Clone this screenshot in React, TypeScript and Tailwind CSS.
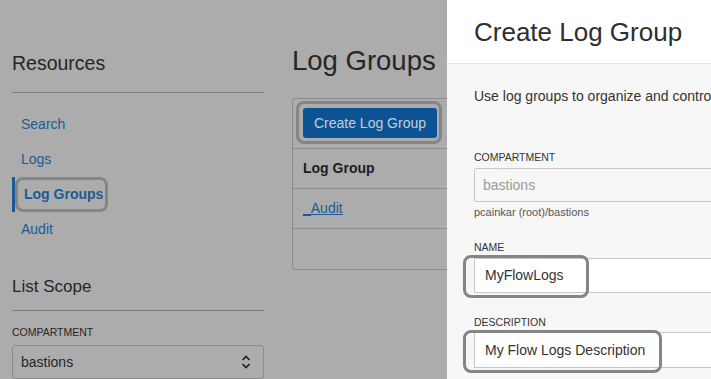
import React from 'react';

const font = { fontFamily: '"Liberation Sans", Arial, sans-serif' };

function Ring({ className }: { className: string }) {
  return <div className={`absolute border-[3px] border-[#858585] rounded-[8px] pointer-events-none ${className}`} />;
}

function Chevrons() {
  return (
    <svg width="10" height="14" viewBox="0 0 10 14" fill="none" stroke="#1e1e1e" strokeWidth="1.6">
      <path d="M1.5 5 L5 1.5 L8.5 5" />
      <path d="M1.5 9 L5 12.5 L8.5 9" />
    </svg>
  );
}

export default function App() {
  const navItems = ['Search', 'Logs', 'Log Groups', 'Audit'];

  return (
    <div className="relative w-[711px] h-[379px] overflow-hidden bg-[#acacac]" style={font}>
      {/* page under the overlay */}
      <div className="flex pl-[12px]">
        <aside className="w-[252px] shrink-0">
          <div className="mt-[53px] text-[19.5px] leading-[20px] text-[#262626]">Resources</div>
          <div className="mt-[19px] border-t border-[#7f7f7f]" />
          <ul className="mt-[14px]">
            {navItems.map((item) => {
              const active = item === 'Log Groups';
              return (
                <li
                  key={item}
                  className={`h-[35px] flex items-center pl-[9px] text-[14px] text-[#1c5a96] ${
                    active ? 'font-bold border-l-[3px] border-[#1c5a96] pl-[6px]' : ''
                  }`}
                >
                  {item}
                </li>
              );
            })}
          </ul>
          <div className="mt-[30px] text-[17px] leading-[20px] text-[#262626]">List Scope</div>
          <div className="mt-[13px] border-t border-[#7f7f7f]" />
          <div className="mt-[14px] text-[10.5px] leading-[14px] text-[#262626]">COMPARTMENT</div>
          <div className="mt-[6px] h-[34px] border border-[#8a8a8a] rounded-[3px] flex items-center justify-between pl-[8px] pr-[12px] text-[14px] text-[#262626]">
            <span>bastions</span>
            <Chevrons />
          </div>
        </aside>

        <main className="ml-[28px] w-[200px] shrink-0">
          <h1 className="mt-[45px] text-[27.5px] leading-[32px] text-[#262626]">Log Groups</h1>
          <div className="mt-[21px] h-[172px] border border-[#8c8c8c] rounded-[3px] overflow-hidden">
            <div className="pl-[10px] pt-[9px] pb-[10px] border-b border-[#8c8c8c]">
              <div className="w-[134px] h-[30px] rounded-[3px] bg-[#0b5394] text-[#c5cfd9] text-[14px] flex items-center justify-center">
                Create Log Group
              </div>
            </div>
            <div className="h-[40px] border-b border-[#8c8c8c] flex items-center pl-[10px] text-[14px] font-bold text-[#1e1e1e]">
              Log Group
            </div>
            <div className="h-[40px] border-b border-[#8c8c8c] flex items-center pl-[10px] text-[14px] text-[#1c5a96]">
              <span className="underline">_Audit</span>
            </div>
          </div>
        </main>
      </div>

      {/* highlight rings on the page */}
      <Ring className="left-[15px] top-[177px] w-[93px] h-[35px]" />
      <Ring className="left-[296px] top-[101px] w-[146px] h-[43px]" />

      {/* side panel */}
      <div className="absolute top-0 bottom-0 left-[447px] right-0 bg-[#f7f7f7] overflow-hidden">
        <div className="h-[64px] bg-white border-b border-[#e2e2e2] pl-[27px] pt-[17px]">
          <div className="text-[26px] leading-[30px] text-[#2e2e2e] whitespace-nowrap">Create Log Group</div>
        </div>
        <div className="pl-[27px]">
          <p className="pt-[22px] text-[14px] leading-[20px] text-[#333] whitespace-nowrap">
            Use log groups to organize and control access to your logs.
          </p>
          <div className="mt-[44px] text-[10.5px] leading-[14px] text-[#333]">COMPARTMENT</div>
          <div className="mt-[4px] w-[320px] h-[34px] border border-[#c6c6cc] rounded-l-[2px] flex items-center pl-[8px] text-[14px] text-[#9a9a9a]">
            bastions
          </div>
          <div className="mt-[3px] text-[11px] leading-[14px] text-[#555]">pcainkar (root)/bastions</div>
          <div className="mt-[21px] text-[10.5px] leading-[14px] text-[#333]">NAME</div>
          <div className="mt-[4px] w-[320px] h-[35px] border border-[#c6c6cc] bg-white flex items-center pl-[10px] text-[14px] text-[#333]">
            MyFlowLogs
          </div>
          <div className="mt-[22px] text-[10.5px] leading-[14px] text-[#333]">DESCRIPTION</div>
          <div className="mt-[3px] w-[320px] h-[36px] border border-[#c6c6cc] bg-white flex items-center pl-[10px] text-[14px] text-[#333]">
            My Flow Logs Description
          </div>
        </div>
      </div>

      {/* highlight rings on the panel */}
      <Ring className="left-[463px] top-[255px] w-[126px] h-[43px]" />
      <Ring className="left-[463px] top-[330px] w-[199px] h-[43px]" />
    </div>
  );
}
